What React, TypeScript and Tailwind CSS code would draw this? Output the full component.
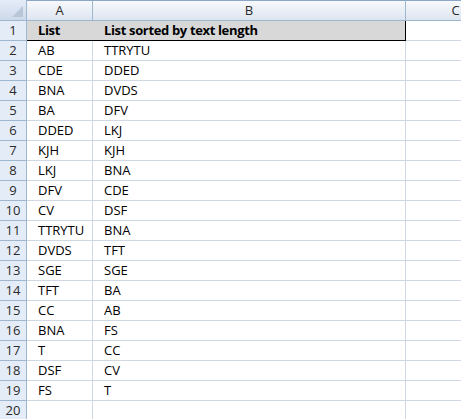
import React from "react";

const listA = ["AB","CDE","BNA","BA","DDED","KJH","LKJ","DFV","CV","TTRYTU","DVDS","SGE","TFT","CC","BNA","T","DSF","FS"];
const listB = ["TTRYTU","DDED","DVDS","DFV","LKJ","KJH","BNA","CDE","DSF","BNA","TFT","SGE","BA","AB","FS","CC","CV","T"];

export default function App() {
  const rows: { a: string; b: string }[] = [];
  for (let i = 0; i < 19; i++) {
    rows.push({ a: i < 18 ? listA[i] : "", b: i < 18 ? listB[i] : "" });
  }
  return (
    <div
      className="w-[461px] h-[419px] overflow-hidden bg-white text-[14px] text-black"
      style={{ fontFamily: '"Open Sans", "Liberation Sans", sans-serif' }}
    >
      <div className="grid grid-cols-[27px_66px_313px_100px] w-[506px]">
        {/* header row */}
        <div className="h-[21px] border-r border-b border-[#9eb6ce] bg-gradient-to-b from-[#e4ecf7] to-[#cdd9ea] relative">
          <div className="absolute right-[3px] bottom-[3px] w-0 h-0 border-l-[11px] border-l-transparent border-b-[11px] border-b-[#b8c6d8]" />
        </div>
        {["A", "B", "C"].map((c) => (
          <div
            key={c}
            className="h-[21px] border-r border-b border-[#9eb6ce] border-t border-t-[#8ba6c6] bg-gradient-to-b from-[#f7f9fc] to-[#dde5f0] flex items-center justify-center text-[13px] text-[#2a2a2a] leading-none"
          >
            {c}
          </div>
        ))}
        {/* row 1 */}
        <div className="h-[20px] border-r border-b border-[#9eb6ce] bg-[#e4ecf7] flex items-center justify-center text-[13px] text-[#2a2a2a] leading-none">
          1
        </div>
        <div className="h-[20px] border-b border-black bg-[#d8d8d8] pl-[11px] flex items-center font-bold text-[13px] tracking-[-0.35px] leading-none">
          List
        </div>
        <div className="h-[20px] border-r border-b border-black bg-[#d8d8d8] pl-[11px] flex items-center font-bold text-[13px] tracking-[-0.35px] leading-none">
          List sorted by text length
        </div>
        <div className="h-[20px] border-r border-b border-[#d0d7e5]" />
        {rows.map((r, i) => (
          <React.Fragment key={i}>
            <div className="h-[20px] border-r border-b border-[#9eb6ce] bg-[#e4ecf7] flex items-center justify-center text-[13px] text-[#2a2a2a] leading-none">
              {i + 2}
            </div>
            <div className="h-[20px] border-r border-b border-[#d0d7e5] pl-[11px] flex items-center text-[13px] leading-none">
              {r.a}
            </div>
            <div className="h-[20px] border-r border-b border-[#d0d7e5] pl-[11px] flex items-center text-[13px] leading-none">
              {r.b}
            </div>
            <div className="h-[20px] border-r border-b border-[#d0d7e5]" />
          </React.Fragment>
        ))}
      </div>
    </div>
  );
}
